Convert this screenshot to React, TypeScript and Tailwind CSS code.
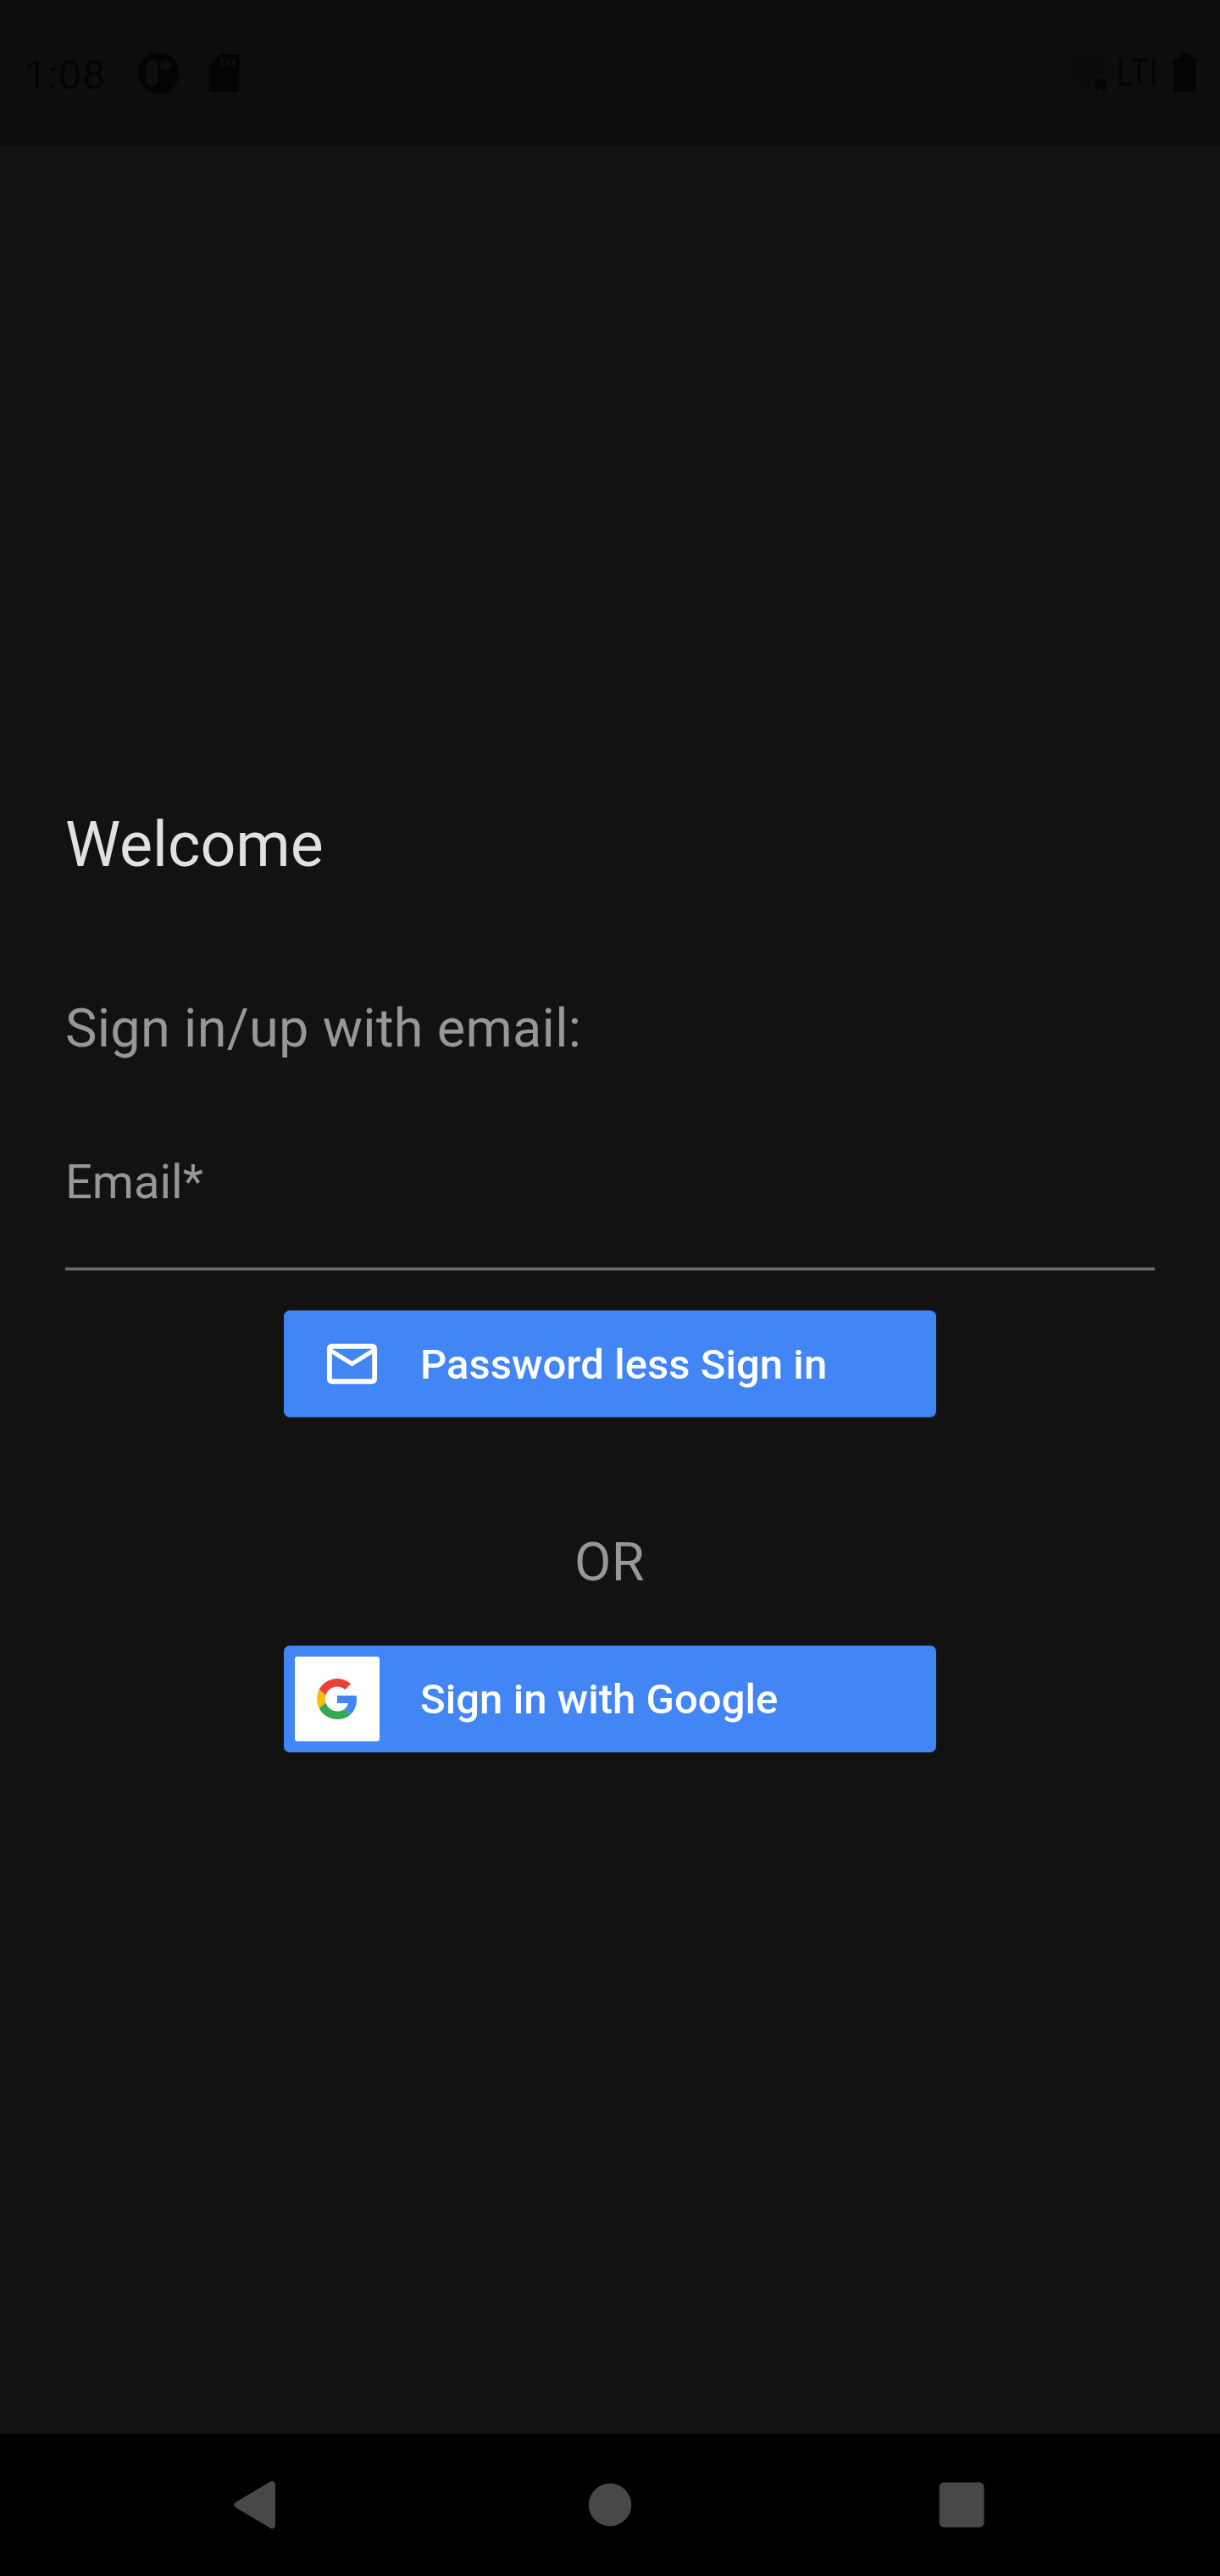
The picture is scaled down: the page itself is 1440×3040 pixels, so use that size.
import React from 'react';

function StatusBar() {
  return (
    <header className="flex h-[172px] shrink-0 items-start justify-between bg-[#0d0d0d] pt-[58px] text-[#040404]">
      <div className="flex pl-7">
        <span className="w-[131px] pt-[2px] text-[49px] leading-[57px] tracking-[0.7px]">1:08</span>
        <svg className="h-[57px] w-[130px]" viewBox="159 58 130 57" fill="currentColor">
          <circle cx="187.3" cy="86.3" r="24.3" />
          <rect x="172.7" y="71" width="14" height="31" rx="7" fill="#0d0d0d" />
          <circle cx="195.3" cy="77.3" r="6.6" fill="#0d0d0d" />
          <path d="M260.3 64H278.500a3.800 3.800 0 0 1 3.800 3.800V105.200a3.800 3.800 0 0 1-3.800 3.800H250.300a3.800 3.800 0 0 1-3.800-3.800V77.700Z" />
          <path d="M260 68.500h4.200v9.500h-4.200zM266.700 68.500h4.200v9.500h-4.200zM273.300 68.500h4.200v9.500h-4.200z" fill="#0d0d0d" />
        </svg>
      </div>
      <div className="flex">
        <svg className="h-[57px] w-[61px]" viewBox="1257 58 61 57">
          <path
            d="M1257.500 75C1273 59.500 1295 59.500 1310.500 75L1300 88H1287V105L1284 107.500Z"
            fill="#0b0b0b"
          />
          <path d="M1293.500 94l11.500 11.500M1305 94l-11.500 11.500" stroke="#040404" strokeWidth="5" />
        </svg>
        <div className="w-[46px] overflow-hidden pt-[2px]">
          <span className="block w-[80px] origin-left scale-x-[0.85] text-[44px] leading-[52px] tracking-[0.6px]">LTE</span>
        </div>
        <svg className="h-[57px] w-[76px]" viewBox="1364 58 76 57" fill="currentColor">
          <path d="M1393 63.300h11V68h4.500a3.500 3.500 0 0 1 3.500 3.500v34a3.500 3.500 0 0 1-3.500 3.500h-20a3.500 3.500 0 0 1-3.500-3.500v-34a3.500 3.500 0 0 1 3.500-3.500h4.500Z" />
        </svg>
      </div>
    </header>
  );
}

function MailIcon() {
  return (
    <svg className="h-[71px] w-[71px]" viewBox="0 0 24 24" fill="#fff">
      <path d="M22 6c0-1.100-.9-2-2-2H4c-1.100 0-2 .9-2 2v12c0 1.100.9 2 2 2h16c1.100 0 2-.9 2-2V6zm-2 0l-8 4.990L4 6h16zm0 12H4V8l8 5 8-5v10z" />
    </svg>
  );
}

function GoogleIcon() {
  return (
    <svg className="h-12 w-12" viewBox="0 0 48 48">
      <path fill="#EA4335" d="M24 9.500c3.540 0 6.710 1.220 9.210 3.600l6.850-6.850C35.900 2.380 30.470 0 24 0 14.620 0 6.510 5.380 2.560 13.220l7.980 6.190C12.430 13.720 17.740 9.500 24 9.500z" />
      <path fill="#4285F4" d="M46.980 24.550c0-1.570-.15-3.090-.38-4.550H24v9.020h12.940c-.58 2.960-2.260 5.480-4.780 7.180l7.730 6c4.510-4.180 7.090-10.360 7.090-17.650z" />
      <path fill="#FBBC05" d="M10.530 28.590c-.48-1.450-.76-2.990-.76-4.590s.27-3.140.76-4.590l-7.980-6.190C.92 16.460 0 20.120 0 24c0 3.880.92 7.540 2.560 10.780l7.970-6.190z" />
      <path fill="#34A853" d="M24 48c6.480 0 11.930-2.130 15.890-5.810l-7.730-6c-2.150 1.450-4.920 2.300-8.160 2.300-6.260 0-11.570-4.220-13.470-9.910l-7.980 6.190C6.510 42.620 14.620 48 24 48z" />
    </svg>
  );
}

function NavBar() {
  return (
    <nav className="h-[168px] shrink-0 bg-black">
      <svg className="block h-[168px] w-[1440px]" viewBox="0 0 1440 168" fill="#484848">
        <path d="M277.600 81.200L318.800 56.700Q321.500 55.300 323.700 57Q325 58 325 60V108Q325 110 323.700 111Q321.500 112.700 318.800 111.300L277.600 86.800Q274.600 84 277.600 81.200Z" />
        <circle cx="720" cy="84" r="25.200" />
        <rect x="1108.700" y="57.600" width="52.800" height="52.800" rx="5.500" />
      </svg>
    </nav>
  );
}

export default function App() {
  return (
    <div className="flex h-[3040px] w-[1440px] flex-col overflow-hidden bg-[#121212] font-['Roboto',sans-serif]">
      <StatusBar />
      <main className="flex flex-1 flex-col px-[77px] pt-[782px]">
        <h1 className="text-[73.5px] leading-[86px] text-[#e1e1e1]">Welcome</h1>
        <p className="mt-[137px] text-[63px] leading-[73px] tracking-[0.3px] text-[#979797]">Sign in/up with email:</p>
        <label className="mt-[112px] block text-[56px] leading-[66px] text-[#979797]">Email*</label>
        <div className="mt-[67px] h-[5px] border-y border-[#2c2c2c] bg-[#6c6c6c]" />
        <button className="mt-[46px] flex h-[127px] w-[770px] items-center self-center rounded-[7px] border-y border-[#2b4c88] bg-[#4285f4] pl-[45px] text-left">
          <MailIcon />
          <span className="mt-[2px] ml-[45px] text-[49px] leading-[57px] font-medium tracking-[0.05px] whitespace-nowrap text-white">Password less Sign in</span>
        </button>
        <p className="mt-[134px] -ml-px text-center text-[63px] leading-[73px] tracking-[0.3px] text-[#979797]">OR</p>
        <button className="mt-[62px] flex h-[126px] w-[770px] items-center self-center rounded-[7px] bg-[#4285f4] pl-[13px] text-left">
          <span className="flex h-[100px] w-[100px] items-center justify-center rounded-[3px] bg-white">
            <GoogleIcon />
          </span>
          <span className="mt-px ml-[48px] text-[49px] leading-[57px] font-medium tracking-[0.05px] whitespace-nowrap text-white">Sign in with Google</span>
        </button>
      </main>
      <NavBar />
    </div>
  );
}
